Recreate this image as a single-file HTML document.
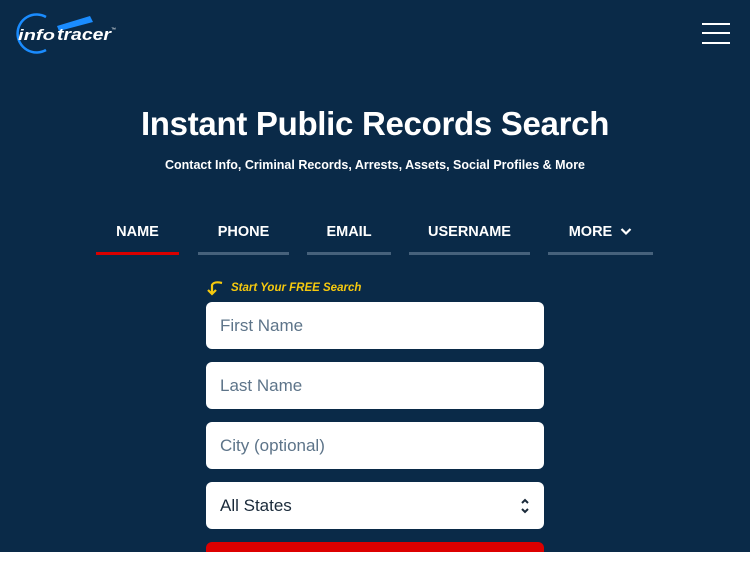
<!DOCTYPE html>
<html><head><meta charset="utf-8"><style>
*{margin:0;padding:0;box-sizing:border-box}
body{width:750px;height:563px;overflow:hidden;background:#fff;font-family:"Liberation Sans",sans-serif}
.hero{position:absolute;left:0;top:0;width:750px;height:552px;background:#0a2a48;overflow:hidden}
.ham{position:absolute;left:702px;width:28px;height:2px;background:#fff}
h1{position:absolute;top:105px;width:750px;text-align:center;color:#fff;font-size:33px;font-weight:bold;letter-spacing:-0.3px}
.sub{position:absolute;top:158px;width:750px;text-align:center;color:#fff;font-size:12.5px;font-weight:bold}
.tab{position:absolute;top:224px;height:31px;color:#fff;font-size:14.5px;font-weight:bold;text-align:center;border-bottom:3px solid #46617b}
.tab.a{border-bottom-color:#d90000}
.free{position:absolute;left:231px;top:282px;color:#f6c90e;font-size:11.5px;font-weight:bold;font-style:italic}
.in{position:absolute;left:206px;width:338px;height:47px;background:#fff;border-radius:6px;padding-left:14px;line-height:47px;font-size:17px;color:#5d7489}
.btn{position:absolute;left:206px;top:542px;width:338px;height:20px;background:#dd0000;border-radius:6px 6px 0 0}
</style></head><body>
<div class="hero">
<svg style="position:absolute;left:0;top:0" width="130" height="60" viewBox="0 0 130 60">
<path d="M46 17 A19 19 0 1 0 46 50" fill="none" stroke="#1a8cff" stroke-width="2.5"/>
<path d="M57 26 L90 16 L93 22 L59 31 Z" fill="#1a8cff"/>
<text x="18" y="40" fill="#fff" font-family="Liberation Sans" font-weight="bold" font-style="italic" font-size="15" textLength="37" lengthAdjust="spacingAndGlyphs">info</text>
<text x="57" y="40" fill="#fff" font-family="Liberation Sans" font-weight="bold" font-style="italic" font-size="17" textLength="54" lengthAdjust="spacingAndGlyphs">tracer</text>
<text x="111" y="31" fill="#fff" font-size="5">™</text>
</svg>
<div class="ham" style="top:23px"></div><div class="ham" style="top:32px"></div><div class="ham" style="top:42px"></div>
<h1>Instant Public Records Search</h1>
<div class="sub">Contact Info, Criminal Records, Arrests, Assets, Social Profiles &amp; More</div>
<div class="tab a" style="left:96px;width:83px">NAME</div>
<div class="tab" style="left:198px;width:91px">PHONE</div>
<div class="tab" style="left:307px;width:84px">EMAIL</div>
<div class="tab" style="left:409px;width:121px">USERNAME</div>
<div class="tab" style="left:548px;width:105px">MORE&nbsp;&nbsp;<svg width="12" height="9" viewBox="0 0 12 9"><path d="M1.5 2 L6 6.5 L10.5 2" fill="none" stroke="#fff" stroke-width="2.2"/></svg></div>
<svg style="position:absolute;left:206px;top:280px" width="18" height="16" viewBox="0 0 18 16"><path d="M16 3 Q8 1 6 5 L6 13 M2 10 L6 14 L10 10" fill="none" stroke="#f6c90e" stroke-width="2.2"/></svg>
<div class="free">Start Your FREE Search</div>
<div class="in" style="top:302px">First Name</div>
<div class="in" style="top:362px">Last Name</div>
<div class="in" style="top:422px">City (optional)</div>
<div class="in" style="top:482px;color:#1a2a3a">All States
<svg style="position:absolute;right:14px;top:15px" width="10" height="18" viewBox="0 0 10 18"><path d="M2 6 L5 3 L8 6 M2 12 L5 15 L8 12" fill="none" stroke="#1a2a3a" stroke-width="2"/></svg></div>
<div class="btn"></div>
</div>
</body></html>
